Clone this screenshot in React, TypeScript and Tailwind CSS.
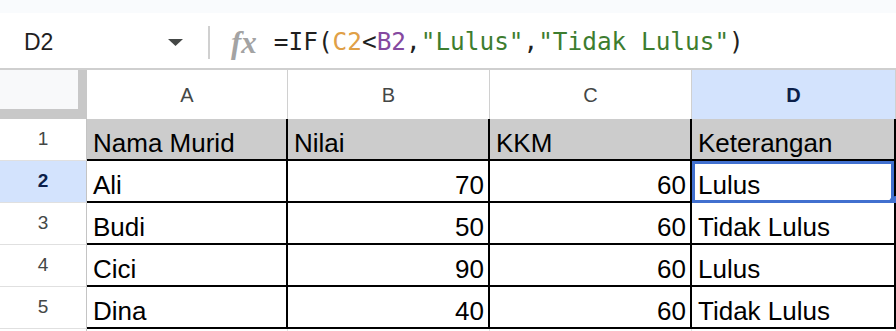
import React from 'react'

const rows = [
  { n: 1, a: 'Nama Murid', b: 'Nilai', c: 'KKM', d: 'Keterangan', head: true },
  { n: 2, a: 'Ali', b: '70', c: '60', d: 'Lulus' },
  { n: 3, a: 'Budi', b: '50', c: '60', d: 'Tidak Lulus' },
  { n: 4, a: 'Cici', b: '90', c: '60', d: 'Lulus' },
  { n: 5, a: 'Dina', b: '40', c: '60', d: 'Tidak Lulus' },
]

const cols = [
  { key: 'A', w: 'w-[201px]' },
  { key: 'B', w: 'w-[202px]' },
  { key: 'C', w: 'w-[202px]' },
  { key: 'D', w: 'w-[204px]' },
]

const cellFont = "font-['Liberation_Sans',Arial,sans-serif] text-[26px] leading-[30px] text-black"

function FormulaBar() {
  return (
    <div className="flex h-[55px] items-center bg-white pt-[3px]">
      <div className="flex w-[208px] items-center justify-between pl-[24px] pr-[25px]">
        <span className="font-['Liberation_Sans',Arial,sans-serif] text-[23px] text-[#1f1f1f]">D2</span>
        <svg width="15" height="7" viewBox="0 0 15 7">
          <path d="M0 0 L15 0 L7.5 7 Z" fill="#444746" />
        </svg>
      </div>
      <div className="h-[33px] w-[2px] bg-[#d0d0d0]" />
      <span className="ml-[21px] font-['Liberation_Serif',serif] text-[31px] font-bold italic leading-none text-[#a3a3a3]">
        fx
      </span>
      <span className="ml-[17px] whitespace-pre font-['DejaVu_Sans_Mono',monospace] text-[24.4px] text-[#1f1f1f]">
        =IF(<span className="text-[#e0a047]">C2</span>&lt;<span className="text-[#8549a0]">B2</span>,<span className="text-[#3d7d2f]">"Lulus"</span>,<span className="text-[#3d7d2f]">"Tidak Lulus"</span>)
      </span>
    </div>
  )
}

function HeaderRow() {
  return (
    <div className="flex h-[49px]">
      <div className="flex h-[49px] w-[87px] bg-[#c8c8c8]">
        <div className="h-[39px] w-[78px] bg-[#f8f9fa]" />
      </div>
      {cols.map((c) => (
        <div
          key={c.key}
          className={`flex items-center justify-center border-r border-[#d0d0d0] font-['Liberation_Sans',Arial,sans-serif] text-[20px] ${c.w} ${
            c.key === 'D' ? 'bg-[#d3e3fd] font-bold text-[#0b1f4a]' : 'bg-white text-[#444746]'
          }`}
        >
          {c.key}
        </div>
      ))}
    </div>
  )
}

function DataRow({ r }: { r: (typeof rows)[number] }) {
  const sel = r.n === 2
  const bg = r.head ? 'bg-[#cccccc]' : 'bg-white'
  return (
    <div className="flex h-[42px]">
      <div
        className={`flex w-[87px] items-center justify-center border-b border-r border-b-[#e0e0e0] border-r-[#c4c4c4] font-['Liberation_Sans',Arial,sans-serif] text-[19px] ${
          sel ? 'bg-[#d3e3fd] font-bold text-[#0b1f4a]' : 'bg-white text-[#444746]'
        }`}
      >
        {r.n}
      </div>
      <div className={`flex w-[201px] items-end border-b-2 border-r-2 border-black pb-[1px] pl-[6px] ${bg} ${cellFont}`}>
        {r.a}
      </div>
      <div
        className={`flex w-[202px] items-end border-b-2 border-r-2 border-black pb-[1px] ${
          r.head ? 'justify-start pl-[6px]' : 'justify-end pr-[4px]'
        } ${bg} ${cellFont}`}
      >
        {r.b}
      </div>
      <div
        className={`flex w-[202px] items-end border-b-2 border-r-2 border-black pb-[1px] ${
          r.head ? 'justify-start pl-[6px]' : 'justify-end pr-[4px]'
        } ${bg} ${cellFont}`}
      >
        {r.c}
      </div>
      <div className={`relative flex w-[204px] items-end border-b-2 border-r-2 border-black pb-[1px] pl-[6px] ${bg} ${cellFont}`}>
        {r.d}
        {sel && (
          <>
            <div className="absolute left-0 right-0 top-0 -bottom-[2px] border-[3px] border-[#4170cf]" />
            <div className="absolute -bottom-[8px] -right-[8px] h-[13px] w-[13px] rounded-full bg-[#4170cf]" />
          </>
        )}
      </div>
    </div>
  )
}

function EmptyRow() {
  return (
    <div className="flex h-[42px]">
      <div className="w-[87px] border-b border-r border-b-[#e0e0e0] border-r-[#c4c4c4] bg-white" />
      {cols.map((c) => (
        <div key={c.key} className={`border-b border-r border-[#e2e2e2] bg-white ${c.w}`} />
      ))}
    </div>
  )
}

export default function App() {
  return (
    <div className="h-[331px] w-[896px] overflow-hidden bg-white">
      <div className="h-[13px] bg-[#f9fbfd]" />
      <FormulaBar />
      <div className="h-[2px] bg-[#cfcfcf]" />
      <HeaderRow />
      {rows.map((r) => (
        <DataRow key={r.n} r={r} />
      ))}
      <EmptyRow />
    </div>
  )
}
